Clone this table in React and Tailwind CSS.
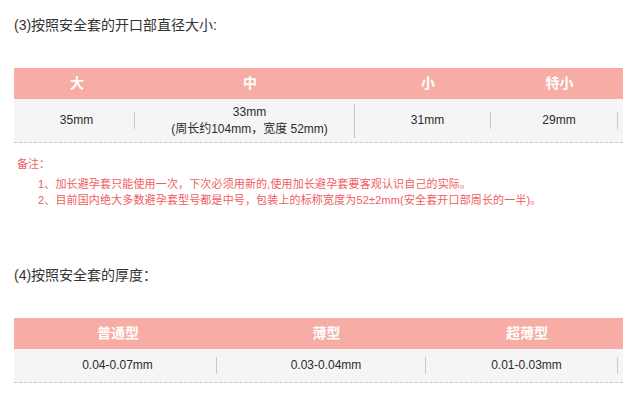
import React from "react";

const font = { fontFamily: '"Liberation Sans", "Noto Sans CJK SC", sans-serif' };

function Cell({ children }) {
  return (
    <div className="flex items-center px-[5px]">
      <div className="flex-1 border-r border-[#c8c8c8] text-center text-[12px] leading-[17px] text-[#2b2b2b]">
        {children}
      </div>
    </div>
  );
}

function SizeTable() {
  const cols = "grid grid-cols-[126px_220px_136px_127px]";
  return (
    <div className="ml-[14px] mt-[33px] w-[609px]">
      <div className={`${cols} h-[31px] items-center bg-[#f7ada5] text-center text-[14px] font-bold text-white`}>
        <div>大</div>
        <div>中</div>
        <div>小</div>
        <div>特小</div>
      </div>
      <div className={`${cols} h-[44px] items-center border-b border-dashed border-[#c8c8c8] bg-[#f5f5f5]`}>
        <Cell>35mm</Cell>
        <Cell>
          33mm
          <br />
          (周长约104mm，宽度 52mm)
        </Cell>
        <Cell>31mm</Cell>
        <Cell>29mm</Cell>
      </div>
    </div>
  );
}

function ThicknessTable() {
  const cols = "grid grid-cols-[208px_209px_192px]";
  return (
    <div className="ml-[14px] mt-[33px] w-[609px]">
      <div className={`${cols} h-[31px] items-center bg-[#f7ada5] text-center text-[14px] font-bold text-white`}>
        <div>普通型</div>
        <div>薄型</div>
        <div>超薄型</div>
      </div>
      <div className={`${cols} h-[34px] items-center border-b border-dashed border-[#c8c8c8] bg-[#f5f5f5]`}>
        <Cell>0.04-0.07mm</Cell>
        <Cell>0.03-0.04mm</Cell>
        <Cell>0.01-0.03mm</Cell>
      </div>
    </div>
  );
}

export default function App() {
  return (
    <div className="h-[393px] w-[632px] overflow-hidden bg-white pt-[15px]" style={font}>
      <div className="pl-[14px] text-[14px] leading-[20px] text-[#333]">(3)按照安全套的开口部直径大小:</div>
      <SizeTable />
      <div className="mt-[11px] pl-[17px] text-[11px] text-[#f25c5f]">
        <div className="leading-[20px]">备注：</div>
        <div className="mt-[2px] pl-[21px] leading-[16px] tracking-[0.15px]">
          <div>1、加长避孕套只能使用一次，下次必须用新的,使用加长避孕套要客观认识自己的实际。</div>
          <div>2、目前国内绝大多数避孕套型号都是中号，包装上的标称宽度为52±2mm(安全套开口部周长的一半)。</div>
        </div>
      </div>
      <div className="mt-[57px] pl-[14px] text-[14px] leading-[20px] text-[#333]">(4)按照安全套的厚度：</div>
      <ThicknessTable />
    </div>
  );
}
